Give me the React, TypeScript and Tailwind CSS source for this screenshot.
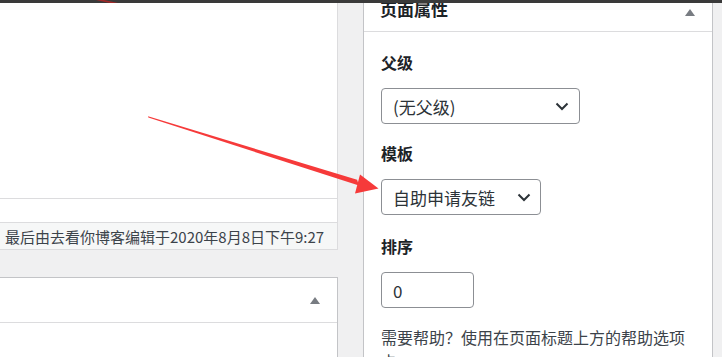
import React from "react"

const font = { fontFamily: '"Noto Sans CJK SC", "Liberation Sans", sans-serif' }

function Chevron() {
  return (
    <svg width="14" height="9" viewBox="0 0 14 9" className="shrink-0">
      <path d="M1.5 1.5 L7 7 L12.5 1.5" fill="none" stroke="#2c3338" strokeWidth="2" />
    </svg>
  )
}

function UpTriangle() {
  return (
    <svg width="10" height="7" viewBox="0 0 10 7">
      <path d="M0 7 L5 0 L10 7 Z" fill="#787c82" />
    </svg>
  )
}

export default function App() {
  return (
    <div className="relative w-[722px] h-[357px] overflow-hidden bg-[#f0f0f1] flex flex-col text-[#1d2327]" style={font}>
      <div className="h-[3px] bg-[#3a3a3a] shrink-0" />

      <div className="flex flex-1 min-h-0">
        {/* editor column */}
        <div className="w-[338px] flex flex-col shrink-0">
          <div className="h-[196px] shrink-0 bg-white border-r border-b border-[#dcdcde]" />
          <div className="h-[23px] shrink-0 bg-white border-r border-[#dcdcde]" />
          <div className="h-[28px] shrink-0 bg-[#f6f7f7] border-y border-r border-[#dcdcde] flex items-center pl-[5px]">
            <span className="text-[15px] leading-none text-[#3c434a] whitespace-nowrap">最后由去看你博客编辑于2020年8月8日下午9:27</span>
          </div>
          <div className="h-[27px] shrink-0" />
          <div className="flex-1 bg-white border-t border-r border-[#c3c4c7]">
            <div className="h-[45px] border-b border-[#dcdcde] flex items-center justify-end pr-[17px]">
              <UpTriangle />
            </div>
          </div>
        </div>

        {/* page attributes box */}
        <div className="ml-[25px] w-[350px] shrink-0 bg-white border-x border-[#c3c4c7] flex flex-col">
          <div className="h-[29px] shrink-0 border-b border-[#dcdcde] flex justify-between overflow-hidden pl-[16px] pr-[17px]">
            <span className="text-[17px] leading-[17px] font-bold -mt-[3px]">页面属性</span>
            <span className="mt-[6px]"><UpTriangle /></span>
          </div>
          <div className="shrink-0 pl-[17px] pt-[18px] flex flex-col items-start">
            <div className="text-[16px] leading-[24px] font-bold">父级</div>
            <div className="mt-[14px] w-[199px] h-[36px] border border-[#8c8f94] rounded-[4px] flex items-center justify-between pl-[11px] pr-[10px]">
              <span className="text-[17px] leading-none text-[#2c3338]">(无父级)</span>
              <Chevron />
            </div>
            <div className="mt-[17px] text-[16px] leading-[24px] font-bold">模板</div>
            <div className="mt-[14px] w-[160px] h-[36px] border border-[#8c8f94] rounded-[4px] flex items-center justify-between pl-[11px] pr-[9px]">
              <span className="text-[17px] leading-none text-[#2c3338]">自助申请友链</span>
              <Chevron />
            </div>
            <div className="mt-[19px] text-[16px] leading-[24px] font-bold">排序</div>
            <div className="mt-[14px] w-[93px] h-[36px] border border-[#8c8f94] rounded-[4px] flex items-center pl-[11px]">
              <span className="text-[17px] leading-none text-[#2c3338]">0</span>
            </div>
            <p className="mt-[17px] text-[16px] leading-[24px] text-[#3c434a] pr-[16px]">需要帮助？使用在页面标题上方的帮助选项卡。</p>
          </div>
        </div>
      </div>

      {/* red annotation arrow */}
      <svg className="absolute inset-0 pointer-events-none" width="722" height="357" viewBox="0 0 722 357">
        <polygon points="96,0 104,0 118,3 110,3" fill="#a02828" />
        <polygon points="148,116.3 148.3,117.6 358.9,185.6 357.1,179.8" fill="#f63a3a" />
        <polygon points="360,174.5 378.5,188.5 355,193.5" fill="#f63a3a" />
      </svg>
    </div>
  )
}
